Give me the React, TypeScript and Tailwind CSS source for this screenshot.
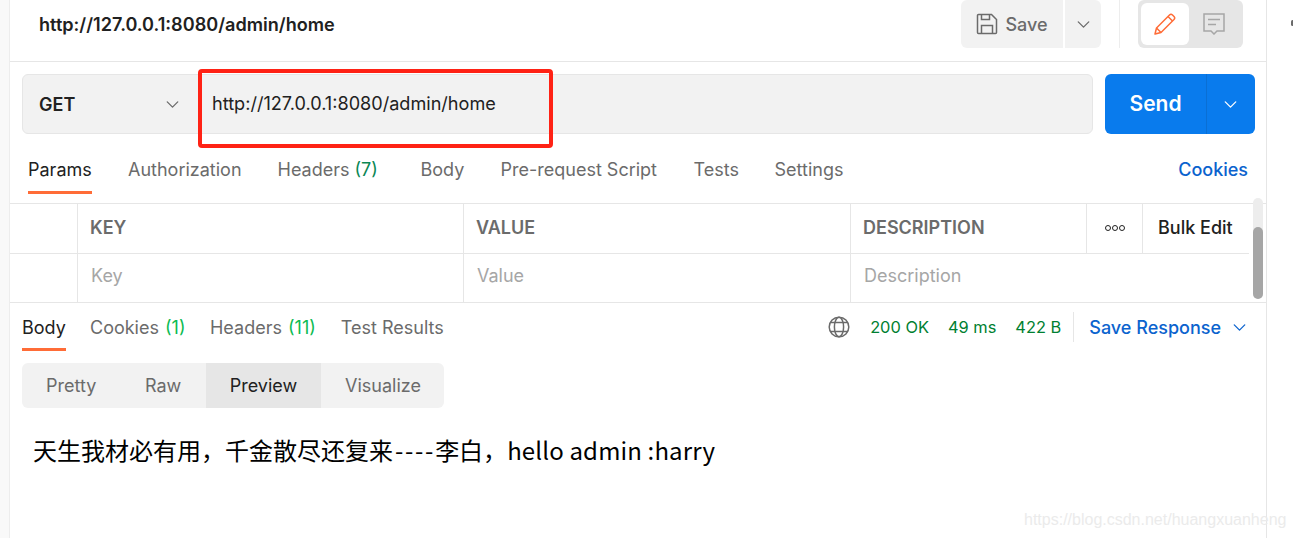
import React from 'react';
import { ChevronDown } from 'lucide-react';

const requestTabs = [
  { label: 'Authorization', width: 'w-[149.5px]' },
  { label: 'Headers', count: '(7)', width: 'w-[143px]' },
  { label: 'Body', width: 'w-[80px]' },
  { label: 'Pre-request Script', width: 'w-[193px]' },
  { label: 'Tests', width: 'w-[81px]' },
  { label: 'Settings', width: 'w-[100px]' },
];

const SaveIcon = () => (
  <svg width="22" height="22" viewBox="0 0 22 22" fill="none" stroke="#6b6b6b" strokeWidth="1.5">
    <path d="M1.5 2.5a1 1 0 0 1 1-1h13l5 5v13a1 1 0 0 1-1 1h-17a1 1 0 0 1-1-1z" />
    <path d="M5.5 1.5v5h8v-5M5.5 20.5v-8h11v8" />
  </svg>
);

const PencilIcon = () => (
  <svg width="22" height="22" viewBox="0 0 22 22" fill="none" stroke="#ff6c37" strokeWidth="1.5" strokeLinejoin="round">
    <path d="M1 21l1.5-6L15.5 2a2.2 2.2 0 0 1 3 0l1.5 1.5a2.2 2.2 0 0 1 0 3L7 19.5z" />
    <path d="M2.5 15L7 19.5M14 3.5L18.5 8" />
  </svg>
);

const CommentIcon = () => (
  <svg width="22" height="22" viewBox="0 0 22 22" fill="none" stroke="#a6a6a6" strokeWidth="1.5">
    <path d="M1 1h20v17h-7l-3 3-3-3H1z" />
    <path d="M5 6.5h12M5 11.5h8" />
  </svg>
);

const GlobeIcon = () => (
  <svg width="22" height="22" viewBox="0 0 22 22" fill="none" stroke="#6b6b6b" strokeWidth="1.5">
    <circle cx="11" cy="11" r="9.8" />
    <ellipse cx="11" cy="11" rx="4.6" ry="9.8" />
    <path d="M2.5 6.5h17M2.5 15.5h17" />
  </svg>
);

export default function App() {
  return (
    <div className="relative flex w-[1293px] h-[538px] overflow-hidden bg-white font-['Inter','Noto_Sans_CJK_SC',sans-serif] text-[18px] text-[#6b6b6b]">
      <div className="w-[10px] shrink-0 bg-[#f9f9f9] border-r border-[#ededed]" />

      <main className="w-[1257px] shrink-0 border-r border-[#e6e6e6] flex flex-col">
        {/* title bar */}
        <div className="h-[62px] shrink-0 border-b border-[#e6e6e6] flex items-start pl-[29px] pr-[23px]">
          <span className="mt-[11px] font-semibold text-[18.1px] text-[#212121]">http://127.0.0.1:8080/admin/home</span>
          <div className="ml-auto flex h-[48px] items-stretch">
            <button className="w-[102px] flex items-center justify-center gap-[7px] bg-[#f2f2f2] rounded-l-[6px] font-medium">
              <SaveIcon />Save
            </button>
            <button className="w-[36px] ml-[2px] flex items-center justify-center bg-[#f2f2f2] rounded-r-[6px]">
              <ChevronDown size={21} strokeWidth={1.5} />
            </button>
            <div className="w-px bg-[#ededed] ml-[18px] mr-[18px]" />
            <div className="w-[105px] bg-[#e6e6e6] rounded-[6px] p-[3px] flex">
              <div className="w-[48px] h-[42px] bg-white rounded-[6px] flex items-center justify-center"><PencilIcon /></div>
              <div className="w-[52px] h-[42px] flex items-center justify-center"><CommentIcon /></div>
            </div>
          </div>
        </div>

        {/* url bar */}
        <div className="h-[60px] mt-[12px] shrink-0 flex pl-[12px] pr-[11px]">
          <div className="flex-1 flex bg-[#f2f2f2] border border-[#e6e6e6] rounded-[6px]">
            <div className="w-[176px] flex items-center justify-between pl-[16px] pr-[16px] font-semibold text-[#212121]">
              <span>GET</span>
              <ChevronDown size={21} strokeWidth={1.5} className="text-[#6b6b6b]" />
            </div>
            <span className="self-center ml-[13px] text-[18.1px] text-[#212121]">http://127.0.0.1:8080/admin/home</span>
          </div>
          <div className="w-[150px] ml-[12px] flex bg-[#097bed] rounded-[6px] text-white">
            <button className="w-[101px] text-[21px] font-semibold">Send</button>
            <div className="w-[48px] flex items-center justify-center border-l border-[#0a6fd4]">
              <ChevronDown size={21} strokeWidth={1.5} />
            </div>
          </div>
        </div>

        {/* request tabs */}
        <div className="mt-[6px] shrink-0 flex items-start pl-[18px] pr-[18px] border-b border-[#e6e6e6] h-[64px]">
          <div className="w-[64px] mr-[36px] pt-[16px] h-[54px] border-b-[3px] border-[#ff6c37] text-[#212121]">Params</div>
          {requestTabs.map(t => (
            <div key={t.label} className={`${t.width} pt-[16px] shrink-0`}>
              {t.label}
              {t.count && <span className="ml-[5px] text-[#0a8754]">{t.count}</span>}
            </div>
          ))}
          <a className="ml-auto pt-[16px] font-medium text-[#0b63ce]">Cookies</a>
        </div>

        {/* params table */}
        <div className="w-[1239px] flex flex-col">
          <div className="h-[50px] flex border-b border-[#e6e6e6] font-semibold">
            <div className="w-[68px] border-r border-[#e6e6e6]" />
            <div className="w-[386px] border-r border-[#e6e6e6] pl-[12px] pb-[2px] flex items-center">KEY</div>
            <div className="w-[387px] border-r border-[#e6e6e6] pl-[12px] pb-[2px] flex items-center">VALUE</div>
            <div className="w-[236px] border-r border-[#e6e6e6] pl-[12px] pb-[2px] flex items-center">DESCRIPTION</div>
            <div className="w-[56px] border-r border-[#e6e6e6] flex items-center justify-center gap-[1px] pb-[1px]">
              {[0, 1, 2].map(i => <span key={i} className="w-[6px] h-[6px] rounded-full border border-[#212121]" />)}
            </div>
            <div className="flex-1 flex items-center pl-[15px] pb-[2px] font-medium text-[#212121]">Bulk Edit</div>
          </div>
          <div className="h-[48px] flex text-[#a6a6a6]">
            <div className="w-[68px] border-r border-[#e6e6e6]" />
            <div className="w-[386px] border-r border-[#e6e6e6] pl-[13px] pb-[5px] flex items-center">Key</div>
            <div className="w-[387px] border-r border-[#e6e6e6] pl-[13px] pb-[5px] flex items-center">Value</div>
            <div className="flex-1 pl-[13px] pb-[5px] flex items-center">Description</div>
          </div>
        </div>

        {/* response */}
        <div className="border-t border-[#e6e6e6] flex-1 pl-[12px]">
          <div className="h-[48px] flex items-start pr-[17px]">
            <div className="w-[44px] h-[48px] pt-[11px] border-b-[3px] border-[#ff6c37] text-[#212121]">Body</div>
            <div className="ml-[24px] pt-[11px]">Cookies <span className="ml-[1px] text-[#0cbb52]">(1)</span></div>
            <div className="ml-[24.5px] pt-[11px]">Headers <span className="ml-[1px] text-[#0cbb52]">(11)</span></div>
            <div className="ml-[25px] pt-[11px]">Test Results</div>
            <div className="ml-auto flex items-center h-[48px] text-[#007f31]">
              <GlobeIcon />
              <span className="ml-[20px] text-[16.4px]">200 OK</span>
              <span className="ml-[19px] text-[16.4px]">49 ms</span>
              <span className="ml-[19px] text-[16.4px]">422 B</span>
              <div className="w-px h-[30px] bg-[#e6e6e6] ml-[12px]" />
              <span className="ml-[15px] font-medium text-[#0b63ce]">Save Response</span>
              <ChevronDown size={21} strokeWidth={1.5} className="ml-[8px] -mr-[1px] text-[#0b63ce]" />
            </div>
          </div>
          <div className="mt-[12px] w-[422px] h-[45px] flex bg-[#f2f2f2] rounded-[6px] overflow-hidden">
            <div className="w-[99px] pl-[24px] flex items-center">Pretty</div>
            <div className="w-[85px] pl-[24px] flex items-center">Raw</div>
            <div className="w-[115px] bg-[#e6e6e6] flex items-center justify-center text-[#212121]">Preview</div>
            <div className="flex-1 pl-[24px] flex items-center">Visualize</div>
          </div>
          <p className="mt-[23px] ml-[11px] text-[24px] leading-[38px] text-black font-['Noto_Sans_CJK_SC',sans-serif]">
            天生我材必有用，千金散尽还复来<span className="tracking-[1.7px] ml-[2px]">----</span>李白，<span className="tracking-[0.15px]">hello admin :harry</span>
          </p>
        </div>
      </main>

      <div className="flex-1 relative">
        <span className="absolute left-[24px] top-[20px] w-[3px] h-[6px] bg-[#6b6b6b] rounded-full" />
      </div>

      {/* params scrollbar */}
      <div className="absolute left-[1253px] top-[198px] w-[10px] h-[101px] rounded-full bg-[#ededed]">
        <div className="absolute left-0 right-0 bottom-0 h-[72px] rounded-full bg-[#a6a6a6]" />
      </div>

      {/* annotation */}
      <div className="absolute left-[198px] top-[69px] w-[355px] h-[79px] border-[4px] border-[#ff2215] rounded-[4px]" />

      {/* watermark */}
      <span className="absolute left-[1024px] top-[510px] text-[16px] leading-[20px] text-[#ebebeb] font-['Liberation_Sans',sans-serif]">https://blog.csdn.net/huangxuanheng</span>
    </div>
  );
}
